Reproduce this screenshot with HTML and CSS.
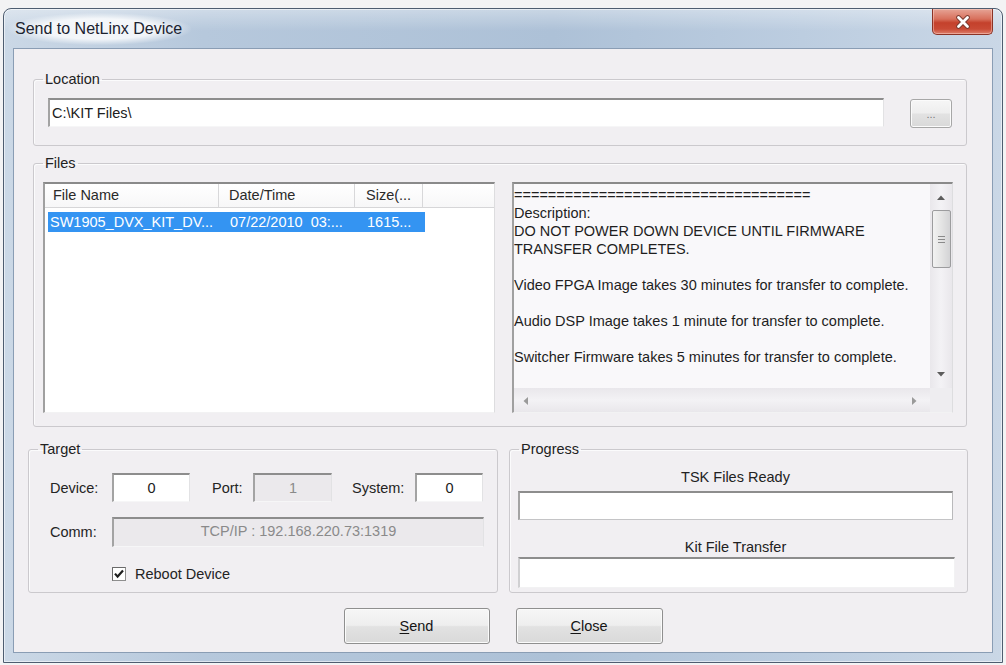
FILE: index.html
```html
<!DOCTYPE html>
<html lang="en">
<head>
<meta charset="utf-8">
<title>Send to NetLinx Device</title>
<link rel="stylesheet" href="styles.css">
</head>
<body>
<div class="window">
  <div class="titlebar">
    <span class="title">Send to NetLinx Device</span>
    <button class="caption-close" aria-label="Close">
      <svg width="16" height="14" viewBox="0 0 16 14">
        <path d="M3.5 2.5 L12.5 11.5 M12.5 2.5 L3.5 11.5" stroke="#7a3a30" stroke-width="4.6" stroke-linecap="round"/>
        <path d="M3.5 2.5 L12.5 11.5 M12.5 2.5 L3.5 11.5" stroke="#ffffff" stroke-width="2.8" stroke-linecap="round"/>
      </svg>
    </button>
  </div>

  <div class="client">
    <fieldset class="group group-location">
      <legend>Location</legend>
      <div class="location-row">
        <div class="field field-path">C:\KIT Files\</div>
        <button class="btn btn-browse">...</button>
      </div>
    </fieldset>

    <fieldset class="group group-files">
      <legend>Files</legend>
      <div class="files-row">
        <div class="listview">
          <div class="lv-header">
            <div class="lv-col col-name">File Name</div>
            <div class="lv-col col-date">Date/Time</div>
            <div class="lv-col col-size">Size(...</div>
          </div>
          <div class="lv-row selected">
            <span class="cell cell-name">SW1905_DVX_KIT_DV...</span>
            <span class="cell cell-date">07/22/2010  03:...</span>
            <span class="cell cell-size">1615...</span>
          </div>
        </div>

        <div class="memo">
<pre class="memo-text">===================================
Description:
DO NOT POWER DOWN DEVICE UNTIL FIRMWARE
TRANSFER COMPLETES.

Video FPGA Image takes 30 minutes for transfer to complete.

Audio DSP Image takes 1 minute for transfer to complete.

Switcher Firmware takes 5 minutes for transfer to complete.</pre>
          <div class="vscroll">
            <span class="arrow">
              <svg width="8" height="5" viewBox="0 0 8 5"><path d="M0 5 L4 0.5 L8 5 Z" fill="#5c5c5c"/></svg>
            </span>
            <span class="thumb-v">
              <svg width="7" height="9" viewBox="0 0 7 9"><path d="M0 1.5 H7 M0 4.5 H7 M0 7.5 H7" stroke="#8a8a8a" stroke-width="1"/></svg>
            </span>
            <span class="arrow arrow-down">
              <svg width="8" height="5" viewBox="0 0 8 5"><path d="M0 0 L4 4.5 L8 0 Z" fill="#5c5c5c"/></svg>
            </span>
          </div>
          <div class="hscroll">
            <span class="arrow">
              <svg width="5" height="8" viewBox="0 0 5 8"><path d="M5 0 L0.5 4 L5 8 Z" fill="#9a9a9a"/></svg>
            </span>
            <span class="arrow">
              <svg width="5" height="8" viewBox="0 0 5 8"><path d="M0 0 L4.5 4 L0 8 Z" fill="#9a9a9a"/></svg>
            </span>
          </div>
          <div class="corner"></div>
        </div>
      </div>
    </fieldset>

    <div class="bottom-row">
      <fieldset class="group group-target">
        <legend>Target</legend>
        <div class="target-row">
          <span class="lbl lbl-device">Device:</span>
          <div class="field num num-device">0</div>
          <span class="lbl lbl-port">Port:</span>
          <div class="field num num-port disabled">1</div>
          <span class="lbl lbl-system">System:</span>
          <div class="field num num-system">0</div>
        </div>
        <div class="target-row comm-row">
          <span class="lbl lbl-device">Comm:</span>
          <div class="field comm disabled">TCP/IP : 192.168.220.73:1319</div>
        </div>
        <label class="check-row">
          <svg class="checkbox" width="14" height="14" viewBox="0 0 14 14">
            <rect x="0.5" y="0.5" width="13" height="13" fill="#ffffff" stroke="#8e8e8e"/>
            <path d="M0.5 13.5 V0.5 H13.5" fill="none" stroke="#6a6a6a"/>
            <path d="M3 6.6 L5.6 9.6 L11 3.6" fill="none" stroke="#1e1e1e" stroke-width="2.2"/>
          </svg>
          <span>Reboot Device</span>
        </label>
      </fieldset>

      <fieldset class="group group-progress">
        <legend>Progress</legend>
        <div class="progress-label">TSK Files Ready</div>
        <div class="field bar"></div>
        <div class="progress-label second">Kit File Transfer</div>
        <div class="field bar bar-second"></div>
      </fieldset>
    </div>

    <div class="actions">
      <button class="btn btn-action"><u>S</u>end</button>
      <button class="btn btn-action btn-close"><u>C</u>lose</button>
    </div>
  </div>
</div>
</body>
</html>
```

FILE: styles.css
```css
* {
  box-sizing: border-box;
}

html,
body {
  margin: 0;
  padding: 0;
}

body {
  width: 1006px;
  height: 665px;
  overflow: hidden;
  background: #f3f3f4;
  font-family: "Liberation Sans", Arial, sans-serif;
  font-size: 14.5px;
  color: #1f1f1f;
}

/* ---------- window frame ---------- */

.window {
  margin: 8px 0 0 3px;
  width: 1000px;
  height: 655px;
  border: 1px solid #4e5d70;
  border-radius: 8px 8px 0 0;
  background:
    linear-gradient(180deg, rgba(255, 255, 255, 0.35) 0px, rgba(255, 255, 255, 0) 22px),
    linear-gradient(90deg, #cbd8e6 0%, #b6c8dc 20%, #adc1d7 55%, #bccde0 80%, #cad7e6 100%);
  box-shadow: inset 0 0 0 1px rgba(255, 255, 255, 0.55);
  display: flex;
  flex-direction: column;
}

.titlebar {
  height: 39px;
  flex: none;
  display: flex;
  align-items: center;
  padding-left: 4px;
}

.title {
  padding: 7px 9px 7px 7px;
  font-size: 16px;
  color: #1b2330;
  background: radial-gradient(ellipse at center, rgba(255, 255, 255, 0.8) 45%, rgba(255, 255, 255, 0) 72%);
}

.caption-close {
  align-self: flex-start;
  margin-left: auto;
  margin-right: 9px;
  width: 61px;
  height: 26px;
  padding: 0;
  border: 1px solid #8b3326;
  border-top: none;
  border-radius: 0 0 5px 5px;
  background: linear-gradient(180deg, #e6a496 0%, #d8705c 40%, #c4412c 55%, #c94a35 80%, #de806c 100%);
  box-shadow: inset 0 0 0 1px rgba(255, 220, 210, 0.45);
  display: flex;
  align-items: center;
  justify-content: center;
}

.client {
  flex: 1;
  margin: 0 9px 9px 9px;
  border: 1px solid #8a9db4;
  background: #f1eff2;
  padding: 22px 0 0 14px;
  display: flex;
  flex-direction: column;
}

/* ---------- group boxes ---------- */

.group {
  margin: 0;
  padding: 0;
  min-width: 0;
  border: 1px solid #cbc9cd;
  border-radius: 3px;
  box-shadow: inset 1px 1px 0 #fbfbfc;
}

.group legend {
  padding: 0 2px;
  line-height: 16px;
  height: 16px;
  color: #222;
}

.group-location {
  width: 934px;
  margin-left: 5px;
  padding: 11px 14px 17px 14px;
}

.group-location legend {
  margin-left: -5px;
}

.location-row {
  display: flex;
  align-items: flex-start;
  gap: 26px;
  height: 30px;
}

.group-files {
  width: 934px;
  margin-left: 5px;
  margin-top: 9px;
  padding: 11px 13px 13px 9px;
}

.group-files legend {
  margin-left: 0;
}

.files-row {
  display: flex;
  gap: 17px;
  height: 231px;
}

/* ---------- sunken fields ---------- */

.field {
  background: #ffffff;
  border-top: 2px solid #8d8d8d;
  border-left: 2px solid #a3a3a3;
  border-right: 1px solid #e2e2e4;
  border-bottom: 1px solid #f6f6f7;
}

.field.disabled {
  background: #ebe9ec;
  color: #8a8a8a;
}

.field-path {
  flex: 1;
  height: 29px;
  padding-left: 2px;
  line-height: 26px;
  color: #202020;
}

/* ---------- buttons ---------- */

.btn {
  font-family: inherit;
  font-size: 14.5px;
  color: #151515;
  border: 1px solid #8f8f8f;
  border-radius: 3px;
  background: linear-gradient(180deg, #f6f6f6 0%, #eeeeee 48%, #e2e2e2 52%, #d9d9d9 100%);
  box-shadow: inset 0 0 0 1px #fbfbfb;
  padding: 0;
}

.btn-browse {
  width: 42px;
  height: 29px;
  margin-top: 1px;
  font-size: 11px;
  color: #7a7a7a;
  line-height: 22px;
  border-color: #a7a7a7;
}

.btn u {
  text-decoration: underline;
  text-underline-offset: 2px;
}

/* ---------- list view ---------- */

.listview {
  width: 452px;
  height: 231px;
  background: #ffffff;
  border-top: 2px solid #8a8a8a;
  border-left: 2px solid #a0a0a0;
  border-right: 1px solid #dddddf;
  border-bottom: 1px solid #f2f2f3;
}

.lv-header {
  display: flex;
  height: 24px;
  border-bottom: 1px solid #d6d6d8;
  background: linear-gradient(180deg, #ffffff 0%, #f7f7f8 100%);
}

.lv-col {
  border-right: 1px solid #d8d8da;
  line-height: 23px;
  color: #2a2a2a;
}

.col-name {
  width: 174px;
  padding-left: 8px;
}

.col-date {
  width: 136px;
  padding-left: 10px;
}

.col-size {
  width: 68px;
  padding-left: 11px;
}

.lv-row {
  display: flex;
  margin: 4px 0 0 3px;
  width: 377px;
  height: 20px;
  line-height: 20px;
  white-space: pre;
}

.lv-row.selected {
  background: #3494f2;
  color: #ffffff;
}

.cell-name {
  width: 171px;
  padding-left: 2px;
}

.cell-date {
  width: 136px;
  padding-left: 11px;
}

.cell-size {
  width: 70px;
  padding-left: 12px;
}

/* ---------- description memo ---------- */

.memo {
  width: 441px;
  height: 231px;
  background: #f9f8fa;
  border-top: 2px solid #8a8a8a;
  border-left: 2px solid #a0a0a0;
  border-right: 1px solid #dddddf;
  border-bottom: 1px solid #f2f2f3;
  display: grid;
  grid-template-columns: 1fr 22px;
  grid-template-rows: 1fr 24px;
}

.memo-text {
  margin: 0;
  padding: 2px 0 0 0;
  font-family: inherit;
  font-size: 14.5px;
  line-height: 18px;
  color: #1e1e1e;
  overflow: hidden;
  white-space: pre;
}

.vscroll {
  background: linear-gradient(90deg, #e9e7eb 0%, #f3f2f5 50%, #e9e7eb 100%);
  display: flex;
  flex-direction: column;
  align-items: center;
}

.vscroll .arrow {
  height: 24px;
  display: flex;
  align-items: center;
  justify-content: center;
  padding-top: 2px;
}

.vscroll .arrow-down {
  margin-top: auto;
  padding-top: 0;
  padding-bottom: 4px;
}

.thumb-v {
  margin-top: 2px;
  width: 19px;
  height: 58px;
  border: 1px solid #9c9c9e;
  border-radius: 2px;
  background: linear-gradient(90deg, #f2f2f2 0%, #e4e4e4 50%, #d3d3d5 100%);
  display: flex;
  align-items: center;
  justify-content: center;
}

.hscroll {
  background: linear-gradient(180deg, #e9e7eb 0%, #f3f2f5 50%, #e9e7eb 100%);
  display: flex;
  align-items: center;
  justify-content: space-between;
  padding: 0 13px 0 9px;
}

.corner {
  background: #eeedf0;
}

/* ---------- bottom groups ---------- */

.bottom-row {
  display: flex;
  margin-top: 14px;
  gap: 11px;
}

.group-target {
  width: 470px;
  height: 152px;
  padding: 16px 0 0 21px;
}

.group-target legend {
  margin-left: -12px;
}

.target-row {
  display: flex;
  align-items: center;
  height: 29px;
}

.lbl {
  color: #242424;
}

.lbl-device {
  width: 62px;
}

.lbl-port {
  width: 41px;
  margin-left: 22px;
}

.lbl-system {
  width: 63px;
  margin-left: 20px;
}

.num {
  height: 29px;
  text-align: center;
  line-height: 26px;
  color: #202020;
}

.num-device {
  width: 78px;
}

.num-port {
  width: 79px;
}

.num-system {
  width: 68px;
}

.comm-row {
  margin-top: 15px;
  height: 30px;
}

.comm {
  width: 372px;
  height: 30px;
  line-height: 25px;
  text-align: center;
}

.check-row {
  display: flex;
  align-items: center;
  gap: 9px;
  margin: 18px 0 0 62px;
  height: 18px;
  color: #242424;
}

.group-progress {
  width: 459px;
  height: 152px;
  padding: 11px 0 0 8px;
}

.group-progress legend {
  margin-left: 1px;
}

.progress-label {
  width: 435px;
  height: 18px;
  line-height: 18px;
  text-align: center;
  color: #222;
}

.progress-label.second {
  margin-top: 18px;
}

.bar {
  width: 435px;
  height: 29px;
  margin-top: 5px;
  border-right-color: #b9b9bb;
  border-bottom-color: #c4c4c6;
}

.bar-second {
  width: 437px;
  height: 31px;
  margin-top: 1px;
  border-left-color: #d0d0d2;
  border-right-color: #f2f2f3;
  border-bottom-color: #f2f2f3;
}

/* ---------- dialog buttons ---------- */

.actions {
  display: flex;
  justify-content: center;
  gap: 26px;
  margin: 15px 0 0 -14px;
}

.btn-action {
  width: 146px;
  height: 36px;
}

.btn-close {
  width: 147px;
}
```
